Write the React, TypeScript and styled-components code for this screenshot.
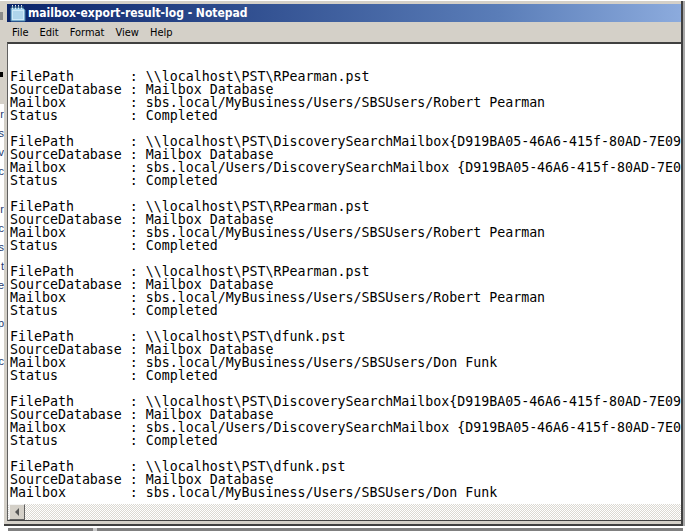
import React from "react";
import styled, { createGlobalStyle } from "styled-components";

type LogEntry = {
  file: string;
  mailbox: string;
};

const longFile = "\\\\localhost\\PST\\DiscoverySearchMailbox{D919BA05-46A6-415f-80AD-7E09334BB852}.pst";
const longMailbox = "sbs.local/Users/DiscoverySearchMailbox {D919BA05-46A6-415f-80AD-7E09334BB852}";
const rp = "\\\\localhost\\PST\\RPearman.pst";
const rpBox = "sbs.local/MyBusiness/Users/SBSUsers/Robert Pearman";
const df = "\\\\localhost\\PST\\dfunk.pst";
const dfBox = "sbs.local/MyBusiness/Users/SBSUsers/Don Funk";

const entries: LogEntry[] = [
  { file: rp, mailbox: rpBox },
  { file: longFile, mailbox: longMailbox },
  { file: rp, mailbox: rpBox },
  { file: rp, mailbox: rpBox },
  { file: df, mailbox: dfBox },
  { file: longFile, mailbox: longMailbox },
  { file: df, mailbox: dfBox },
];

const menus = ["File", "Edit", "Format", "View", "Help"];

// edge of the window that sits behind notepad
const behindLetters = ["r", "s", "v", "c", "", "r", "c", "s", "t", "e", "", "p", "", "c"];

const NotepadIcon = () => (
  <svg width="16" height="17" viewBox="0 0 16 17">
    <path d="M1 3h12l2 2v11H1z" fill="#a9d6f0" stroke="#4d86ad" strokeWidth="1" />
    <path d="M2 5h12v10H2z" fill="#cfe9f8" />
    <path d="M3 7h10M3 9h10M3 11h10M3 13h10" stroke="#8fc0de" strokeWidth="1" />
    <path d="M2.5 0v4M5.5 0v4M8.5 0v4M11.5 0v4" stroke="#e8f0f4" strokeWidth="1" />
    <path d="M1 2h13" stroke="#2f5f82" strokeWidth="1" />
  </svg>
);

const App = () => {
  const text = entries
    .map((e, i) => {
      const lines = [
        `FilePath       : ${e.file}`,
        `SourceDatabase : Mailbox Database`,
        `Mailbox        : ${e.mailbox}`,
      ];
      if (i < entries.length - 1) lines.push(`Status         : Completed`, "");
      return lines.join("\n");
    })
    .join("\n");

  return (
    <>
      <GlobalStyle />
      <Page>
        <BehindStrip>
          <BehindToolbar>
            <BehindThumb />
            <BehindMark />
          </BehindToolbar>
          {behindLetters.map((l, i) => (
            <BehindLine key={i}>{l}</BehindLine>
          ))}
        </BehindStrip>
        <WindowColumn>
          <Window>
            <TitleBar>
              <NotepadIcon />
              <TitleText>mailbox-export-result-log - Notepad</TitleText>
            </TitleBar>
            <MenuBar>
              {menus.map((m) => (
                <MenuItem key={m}>{m}</MenuItem>
              ))}
            </MenuBar>
            <Editor>
              <LogText>{text}</LogText>
            </Editor>
            <ScrollBar>
              <ScrollButton>
                <ScrollArrow />
              </ScrollButton>
            </ScrollBar>
          </Window>
          <WindowShadow />
        </WindowColumn>
      </Page>
    </>
  );
};

export default App;

const GlobalStyle = createGlobalStyle`
  html, body {
    margin: 0;
    padding: 0;
    background: #ffffff;
  }
`;

const Page = styled.div`
  display: flex;
  width: 685px;
  height: 532px;
  padding-top: 1px;
  box-sizing: border-box;
  overflow: hidden;
`;

const BehindStrip = styled.div`
  width: 4px;
  flex: none;
  overflow: hidden;
`;

const BehindToolbar = styled.div`
  display: flex;
  flex-direction: column;
  height: 103px;
  padding-top: 11px;
  box-sizing: border-box;
  background: #d4d0c8;
`;

const BehindThumb = styled.div`
  width: 3px;
  height: 8px;
  background: #8a8a8a;
`;

const BehindMark = styled.div`
  width: 3px;
  height: 5px;
  margin-top: 52px;
  background: #000000;
`;

const BehindLine = styled.div`
  display: flex;
  justify-content: flex-end;
  align-items: center;
  height: 19px;
  font: 11px "Liberation Sans", Arial, sans-serif;
  color: #1f3a6e;
`;

const WindowColumn = styled.div`
  display: flex;
  flex-direction: column;
  width: 679px;
  flex: none;
`;

const Window = styled.div`
  display: flex;
  flex-direction: column;
  height: 525px;
  flex: none;
  box-sizing: border-box;
  padding: 3px 0 3px 3px;
  background: #d4d0c8;
  border-right: 2px solid #404040;
  border-bottom: 2px solid #404040;
  box-shadow: 2px 0 0 #a8a8a8;
`;

const WindowShadow = styled.div`
  height: 3px;
  margin: 2px 0 0 4px;
  background: linear-gradient(to right, #808080 85px, #c8c8c8 85px, #c8c8c8 89px, #808080 89px);
`;

const TitleBar = styled.div`
  display: flex;
  align-items: center;
  gap: 2px;
  height: 18px;
  flex: none;
  padding-left: 3px;
  background: linear-gradient(to right, #0a246a 0%, #5a7db8 73%, #8cabdd 100%);
`;

const TitleText = styled.span`
  font: bold 12px "DejaVu Sans Condensed", "Liberation Sans", Arial, sans-serif;
  font-stretch: condensed;
  color: #ffffff;
`;

const MenuBar = styled.div`
  display: flex;
  align-items: center;
  gap: 11px;
  height: 20px;
  flex: none;
  padding-left: 5px;
  background: #d4d0c8;
`;

const MenuItem = styled.span`
  font: 11px "DejaVu Sans Condensed", "Liberation Sans", Arial, sans-serif;
  font-stretch: condensed;
  color: #000000;
`;

const Editor = styled.div`
  flex: 1;
  min-height: 0;
  overflow: hidden;
  background: #ffffff;
  border-top: 2px solid #404040;
  border-left: 1px solid #606060;
  padding: 26px 0 0 2px;
`;

const LogText = styled.pre`
  margin: 0;
  font: 13.28px/13px "DejaVu Sans Mono", monospace;
  color: #000000;
`;

const ScrollBar = styled.div`
  height: 17px;
  flex: none;
  box-sizing: border-box;
  border-left: 1px solid #606060;
  border-bottom: 1px solid #404040;
  background-color: #ffffff;
  background-image: repeating-conic-gradient(#dcd9d2 0 25%, #ffffff 0 50%);
  background-size: 2px 2px;
`;

const ScrollButton = styled.div`
  width: 16px;
  height: 16px;
  margin-left: 1px;
  display: flex;
  align-items: center;
  justify-content: center;
  box-sizing: border-box;
  background: #d4d0c8;
  border: 1px solid;
  border-color: #f4f4f4 #606060 #606060 #f4f4f4;
`;

const ScrollArrow = styled.span`
  width: 0;
  height: 0;
  border-top: 4px solid transparent;
  border-bottom: 4px solid transparent;
  border-right: 4px solid #555555;
`;
